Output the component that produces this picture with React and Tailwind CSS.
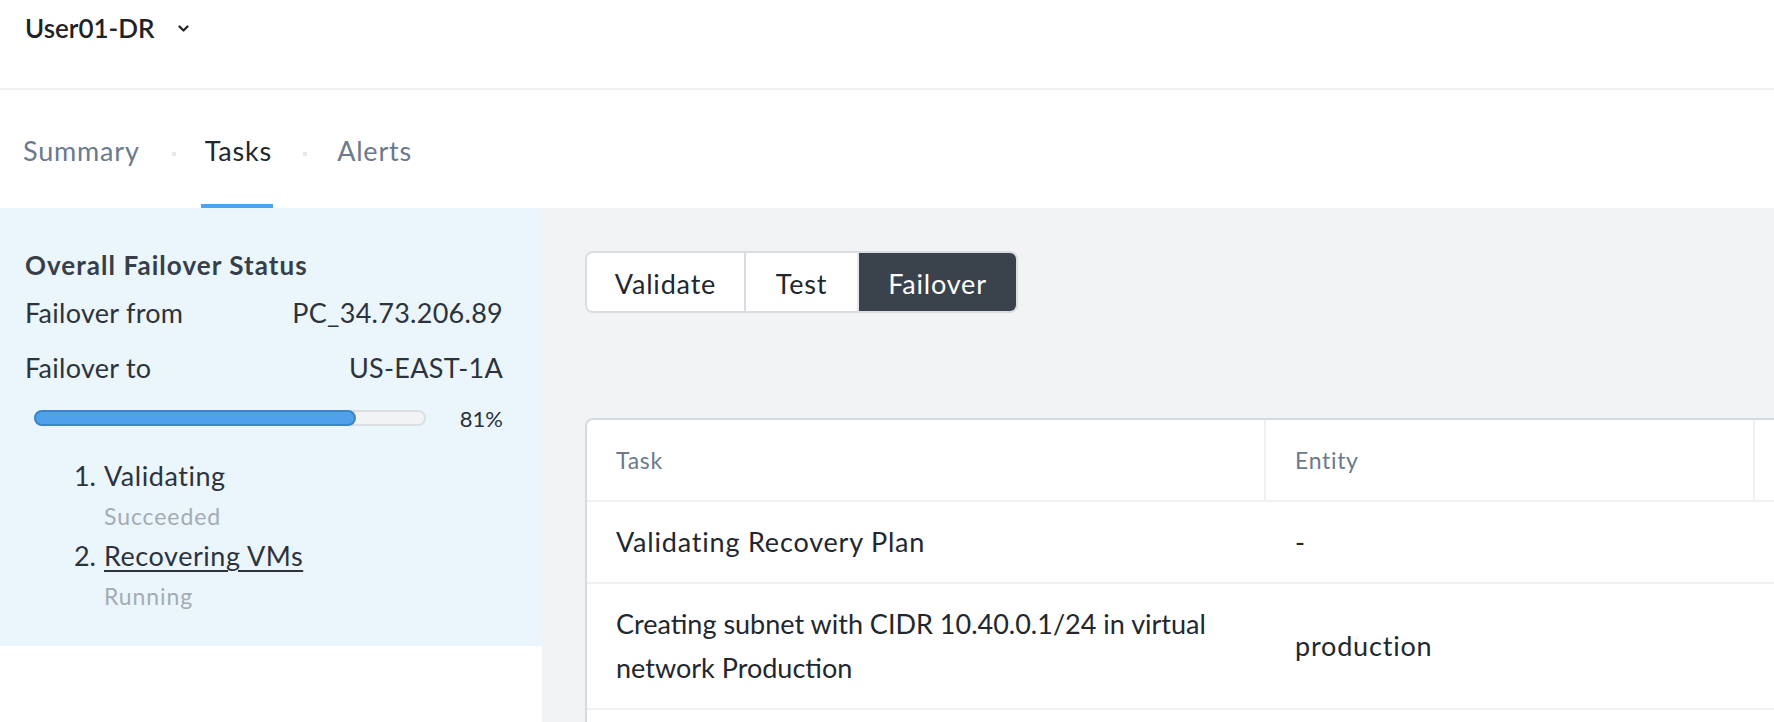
export default function App() {
  const font = { fontFamily: "Lato, 'Open Sans', sans-serif" };
  return (
    <div className="w-full h-[722px] overflow-hidden bg-white" style={font}>
      {/* Header */}
      <div className="h-[90px] border-b-2 border-[#eef0f2] pl-[25px] pt-[12px]">
        <div className="flex items-center h-8">
          <span className="text-[26px] leading-[32px] font-semibold text-[#1f2328]">User01-DR</span>
          <svg className="ml-[23px] mt-[1px]" width="11" height="7" viewBox="0 0 11 7" fill="none">
            <path d="M1.5 1.5l4 4 4-4" stroke="#1f2328" strokeWidth="2.2" strokeLinecap="round" strokeLinejoin="round" />
          </svg>
        </div>
      </div>

      {/* Tabs */}
      <div className="h-[118px] flex items-start pl-[23px] pt-[45px] text-[27px] leading-[32px] tracking-[0.03em]">
        <div className="pb-[37px] border-b-4 border-transparent text-[#6b7a8c]">Summary</div>
        <div className="h-8 flex items-center ml-[32px] mr-[25px] mt-[3px]"><div className="w-1 h-1 bg-[#e6e9ec]" /></div>
        <div className="pb-[37px] border-b-4 border-[#4ca3ee] text-[#22272e] pl-[4px] pr-[1px]">Tasks</div>
        <div className="h-8 flex items-center mx-[30px] mt-[3px]"><div className="w-1 h-1 bg-[#e6e9ec]" /></div>
        <div className="pb-[37px] border-b-4 border-transparent text-[#6b7a8c]">Alerts</div>
      </div>

      {/* Content */}
      <div className="flex h-[514px]">
        {/* Left */}
        <div className="w-[542px] shrink-0 bg-white">
          <div className="h-[438px] bg-[#ebf5fc] pl-[25px] pr-[39px] pt-[42px]">
            <div className="text-[26px] leading-[30px] font-bold tracking-[0.04em] text-[#363f49]">Overall Failover Status</div>
            <div className="mt-[17px] flex justify-between text-[27px] leading-[32px] tracking-[0.01em] text-[#2d333b]">
              <span>Failover from</span>
              <span>PC_34.73.206.89</span>
            </div>
            <div className="mt-[23px] flex justify-between text-[27px] leading-[32px] tracking-[0.01em] text-[#2d333b]">
              <span>Failover to</span>
              <span>US-EAST-1A</span>
            </div>
            <div className="mt-[18px] h-8 flex items-center">
              <div className="ml-[9px] w-[393px] h-4 rounded-full bg-[#f2f3f4] border-2 border-[#dcdfe2] relative">
                <div className="absolute -top-[2px] -left-[2px] h-4 w-[83%] rounded-full bg-[#4ea1ea] border-2 border-[#3c86c8]" />
              </div>
              <span className="ml-[34px] text-[22px] text-[#2a3038]">81%</span>
            </div>
            <div className="mt-[26px]">
              <div className="flex">
                <span className="w-[71px] text-right text-[27px] leading-[32px] text-[#2d333b]">1.</span>
                <div className="ml-[8px]">
                  <div className="text-[27px] leading-[32px] tracking-[0.02em] text-[#2d333b]">Validating</div>
                  <div className="mt-[10px] text-[23px] leading-[28px] tracking-[0.04em] text-[#a3abb5]">Succeeded</div>
                </div>
              </div>
              <div className="flex mt-[10px]">
                <span className="w-[71px] text-right text-[27px] leading-[32px] text-[#2d333b]">2.</span>
                <div className="ml-[8px]">
                  <div className="text-[27px] leading-[32px] tracking-[0.02em] text-[#2d333b] underline underline-offset-[4px] decoration-[1.5px]">Recovering VMs</div>
                  <div className="mt-[10px] text-[23px] leading-[28px] tracking-[0.04em] text-[#a3abb5]">Running</div>
                </div>
              </div>
            </div>
          </div>
        </div>

        {/* Right */}
        <div className="flex-1 bg-[#f2f3f5] pl-[43px] pt-[43px] overflow-hidden">
          <div className="inline-flex h-[62px] border-2 border-[#d9dde2] rounded-[8px] overflow-hidden text-[27px] tracking-[0.03em]">
            <div className="w-[159px] pt-[4px] flex items-center justify-center bg-white text-[#22272e] border-r-2 border-[#d9dde2]">Validate</div>
            <div className="w-[113px] pt-[4px] flex items-center justify-center bg-white text-[#22272e] border-r-2 border-[#e4e7ea]">Test</div>
            <div className="w-[157px] pt-[4px] flex items-center justify-center bg-[#3a424c] text-white">Failover</div>
          </div>

          <div className="mt-[105px] w-[1400px] bg-white border-l-2 border-t-2 border-[#d5dae0] rounded-tl-[8px]">
            <div className="grid grid-cols-[679px_489px_1fr] h-[82px] border-b-2 border-[#eef0f2] text-[23px] tracking-[0.03em] text-[#6b7a8c]">
              <div className="flex items-center pl-[29px] border-r-2 border-[#eef0f2]">Task</div>
              <div className="flex items-center pl-[29px] border-r-2 border-[#eef0f2]">Entity</div>
              <div />
            </div>
            <div className="grid grid-cols-[679px_489px_1fr] h-[82px] border-b-2 border-[#eef0f2] text-[27px] text-[#22272e]">
              <div className="flex items-center pl-[29px] tracking-[0.03em]">Validating Recovery Plan</div>
              <div className="flex items-center pl-[29px]">-</div>
              <div />
            </div>
            <div className="grid grid-cols-[679px_489px_1fr] h-[126px] border-b-2 border-[#eef0f2] text-[27px] text-[#22272e]">
              <div className="flex items-center pl-[29px] pr-[29px] leading-[44px]">Creating subnet with CIDR 10.40.0.1/24 in virtual network Production</div>
              <div className="flex items-center pl-[29px] tracking-[0.03em]">production</div>
              <div />
            </div>
            <div className="h-[80px]" />
          </div>
        </div>
      </div>
    </div>
  );
}
